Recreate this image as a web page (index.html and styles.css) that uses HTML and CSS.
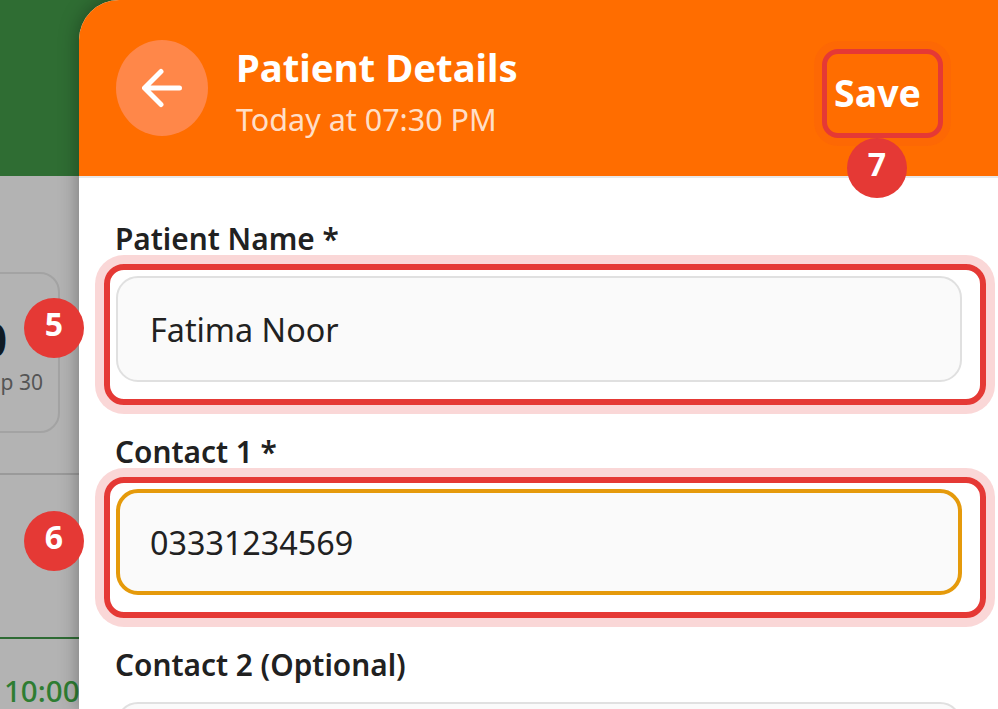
FILE: index.html
```html
<!DOCTYPE html>
<html lang="en">
<head>
<meta charset="utf-8">
<title>Patient Details</title>
<link rel="stylesheet" href="styles.css">
</head>
<body>
<div class="screen">
  <div class="backdrop">
    <div class="back-header"></div>
    <div class="back-stats">
      <div class="stat-card">
        <span class="stat-value">0</span>
        <span class="stat-label">Sep 30</span>
      </div>
    </div>
    <div class="back-time">
      <span class="time-text">10:00</span>
    </div>
  </div>

  <section class="panel">
    <header class="panel-header">
      <button class="back-btn" aria-label="Back">
        <svg class="back-icon" viewBox="0 0 40 40" width="40" height="40"><path d="M37.5 20H3M19 3.5 2.5 20 19 36.5" fill="none" stroke="#fff" stroke-width="5" stroke-linecap="round" stroke-linejoin="round"/></svg>
      </button>
      <div class="titles">
        <h1 class="title">Patient Details</h1>
        <p class="subtitle">Today at 07:30 PM</p>
      </div>
      <div class="save-wrap">
        <button class="save-btn">Save</button>
        <span class="badge badge-save">7</span>
      </div>
    </header>

    <form class="form">
      <div class="field">
        <label class="label">Patient Name *</label>
        <div class="input-wrap">
          <div class="input">Fatima Noor</div>
          <div class="ring"></div>
          <span class="badge badge-side">5</span>
        </div>
      </div>
      <div class="field">
        <label class="label">Contact 1 *</label>
        <div class="input-wrap">
          <div class="input input-focus">03331234569</div>
          <div class="ring"></div>
          <span class="badge badge-side">6</span>
        </div>
      </div>
      <div class="field">
        <label class="label">Contact 2 (Optional)</label>
        <div class="input-wrap">
          <div class="input"></div>
        </div>
      </div>
    </form>
  </section>
</div>
</body>
</html>
```

FILE: styles.css
```css
* { box-sizing: border-box; }

html, body {
  margin: 0;
  padding: 0;
  background: #b3b3b3;
}

body {
  font-family: "Noto Sans", "Open Sans", "Liberation Sans", sans-serif;
  color: #212121;
}

.screen {
  position: relative;
  width: 998px;
  height: 709px;
  overflow: hidden;
  isolation: isolate;
}

/* dimmed page behind the sheet */
.backdrop {
  display: flex;
  flex-direction: column;
  height: 100%;
  background: #b3b3b3;
}

.back-header {
  height: 176px;
  background: #2f6d33;
}

.back-stats {
  display: flex;
  justify-content: flex-end;
  width: 79px;
  height: 299px;
  padding: 96px 19px 0 0;
  border-bottom: 2px solid #9a9a9a;
}

.stat-card {
  display: flex;
  flex-direction: column;
  align-items: flex-end;
  flex: none;
  width: 120px;
  height: 161px;
  border: 2px solid #a3a3a3;
  border-radius: 20px;
  padding: 36px 15px 0 0;
}

.stat-value {
  font-size: 46px;
  line-height: 58px;
  font-weight: 700;
  color: #0f1a24;
  margin-right: 36px;
}

.stat-label {
  font-size: 21px;
  line-height: 28px;
  color: #555;
}

.back-time {
  width: 79px;
  height: 72px;
  margin-top: 162px;
  padding: 33px 0 0 4px;
  border-top: 2px solid #2e6b34;
}

.time-text {
  font-size: 29.5px;
  line-height: 38px;
  font-weight: 500;
  color: #2e7d32;
  white-space: nowrap;
}

/* sheet */
.panel {
  position: absolute;
  top: 0;
  left: 79px;
  right: 0;
  bottom: 0;
  display: flex;
  flex-direction: column;
  background: #fff;
  border-top-left-radius: 40px;
  box-shadow: 0 0 20px rgba(0, 0, 0, 0.35);
}

.panel-header {
  display: flex;
  align-items: center;
  flex: none;
  height: 178px;
  padding: 0 55px 0 37px;
  background: #ff6d00;
  border-top-left-radius: 40px;
  border-bottom: 2px solid #e8e8e8;
}

.back-btn {
  display: flex;
  align-items: center;
  justify-content: center;
  flex: none;
  width: 92px;
  height: 96px;
  padding: 0;
  border: 0;
  border-radius: 50%;
  background: #ff8749;
}

.titles {
  flex: 1;
  margin-left: 28px;
  padding-top: 6px;
}

.title {
  margin: 0;
  font-size: 38.3px;
  line-height: 48px;
  font-weight: 700;
  color: #fff;
}

.subtitle {
  margin: 8px 0 0;
  font-size: 30.5px;
  line-height: 40px;
  color: rgba(255, 255, 255, 0.8);
}

.save-wrap {
  position: relative;
  display: flex;
  justify-content: center;
  margin-top: 11px;
}

.save-btn {
  width: 121px;
  height: 89px;
  padding: 0 10px 2px 0;
  border: 5px solid #e53935;
  border-radius: 16px;
  background: transparent;
  box-shadow: 0 0 0 8px rgba(229, 57, 53, 0.08);
  font-family: inherit;
  font-size: 37.5px;
  font-weight: 700;
  color: #fff;
}

.badge {
  position: absolute;
  display: flex;
  align-items: center;
  justify-content: center;
  width: 60px;
  height: 60px;
  padding-bottom: 9px;
  border-radius: 50%;
  background: #e53935;
  color: #fff;
  font-size: 32px;
  font-weight: 700;
}

.badge-save {
  top: 89px;
  left: 25px;
}

.badge-side {
  left: -92px;
  top: 22px;
}

/* form */
.form {
  display: flex;
  flex-direction: column;
  gap: 50px;
  padding: 41px 36px 0 37px;
}

.label {
  display: block;
  margin-left: -1px;
  padding-top: 1px;
  font-size: 29.8px;
  line-height: 38px;
  font-weight: 600;
  color: #212121;
}

.input-wrap {
  position: relative;
  margin-top: 18px;
}

.input {
  display: flex;
  align-items: center;
  height: 106px;
  padding: 0 32px;
  border: 2px solid #e0e0e0;
  border-radius: 22px;
  background: #fafafa;
  font-size: 32.3px;
  color: #212121;
}

.input-focus {
  padding: 0 30px;
  border: 4px solid #e59a0b;
}

.ring {
  position: absolute;
  top: -12px;
  left: -12px;
  right: -24px;
  bottom: -23px;
  border: 6px solid #e53935;
  border-radius: 20px;
  box-shadow: 0 0 0 9px rgba(229, 57, 53, 0.2);
  pointer-events: none;
}
```
